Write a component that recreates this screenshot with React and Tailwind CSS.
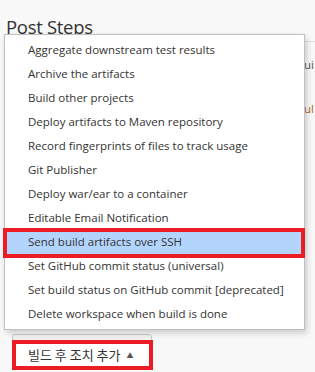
import React from 'react';

const items = [
  'Aggregate downstream test results',
  'Archive the artifacts',
  'Build other projects',
  'Deploy artifacts to Maven repository',
  'Record fingerprints of files to track usage',
  'Git Publisher',
  'Deploy war/ear to a container',
  'Editable Email Notification',
  'Send build artifacts over SSH',
  'Set GitHub commit status (universal)',
  'Set build status on GitHub commit [deprecated]',
  'Delete workspace when build is done',
];

const App = () => {
  return (
    <div
      className="relative w-[315px] h-[372px] overflow-hidden bg-[#f8f8f8] text-[#333]"
      style={{ fontFamily: '"Open Sans", "Noto Sans CJK KR", sans-serif' }}
    >
      {/* Page underneath */}
      <div className="pt-[14px] pl-[6px]">
        <h2 className="text-[18.5px] leading-[26px] tracking-[-0.3px] text-[#333]">Post Steps</h2>
      </div>
      <div className="ml-[6px] mt-[1px] h-[290px] border-t border-[#e0e0e0]">
        <div className="flex flex-col items-end pt-[14px] gap-[27px] text-[11.5px]">
          <span className="w-[11px] overflow-hidden text-[#555]">ui</span>
          <span className="w-[11px] overflow-hidden text-[#b5651d]">ul</span>
        </div>
      </div>
      <div className="pl-[12px] pt-[3px]">
        <div className="w-[140px] h-[28px] rounded-[3px] border border-[#c8c8c8] bg-[#f0f0f0]" />
      </div>

      {/* Dropdown menu */}
      <div className="absolute left-[4px] top-[34px] w-[301px] h-[296px] bg-white border border-[#c0c0c0] shadow-[2px_3px_6px_rgba(0,0,0,0.18)] py-[3px]">
        {items.map((item) => (
          <div
            key={item}
            className={`h-[24px] flex items-center pl-[23px] text-[11.5px] text-[#333] whitespace-nowrap ${
              item === 'Send build artifacts over SSH' ? 'bg-[#b3d4fc]' : ''
            }`}
          >
            {item}
          </div>
        ))}
      </div>

      {/* Highlight frame around selected item */}
      <div className="absolute left-[3px] top-[228px] w-[302px] h-[30px] border-[4px] border-[#ed1c24]" />

      {/* Add post-build action button */}
      <div className="absolute left-[12px] top-[340px] w-[141px] h-[30px] border-[4px] border-[#ed1c24] bg-white flex items-center pl-[12px] text-[13px] text-[#333]">
        <span style={{ fontFamily: '"Noto Sans CJK KR", sans-serif' }}>빌드 후 조치 추가</span>
        <span className="ml-[6px] text-[7px] leading-none text-[#555]">▲</span>
      </div>
    </div>
  );
};

export default App;
